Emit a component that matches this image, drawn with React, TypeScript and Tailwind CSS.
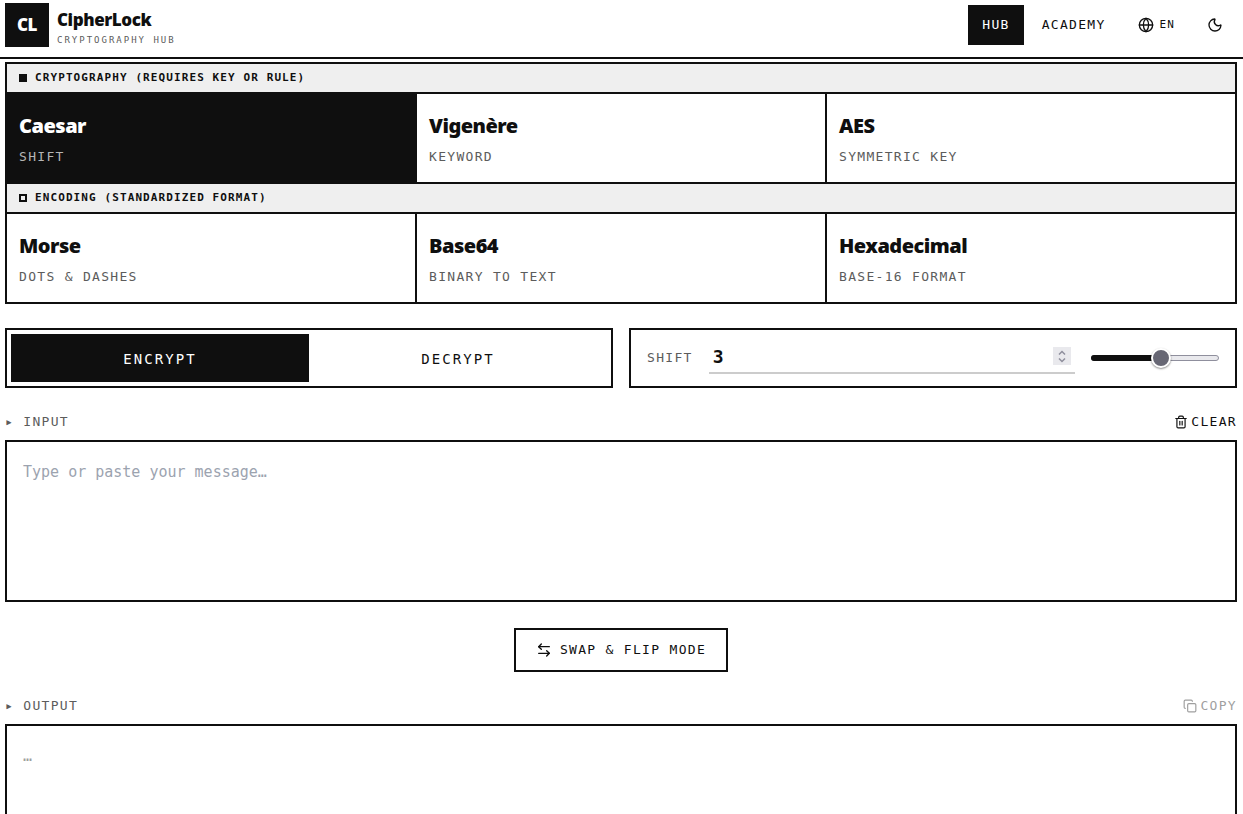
import React, { useState } from 'react';
import { ArrowLeftRight, Copy, Globe, Moon, Trash2 } from 'lucide-react';

type Cipher = { id: string; name: string; hint: string };

const CRYPTOGRAPHY: Cipher[] = [
  { id: 'caesar', name: 'Caesar', hint: 'Shift' },
  { id: 'vigenere', name: 'Vigenère', hint: 'Keyword' },
  { id: 'aes', name: 'AES', hint: 'Symmetric key' },
];

const ENCODING: Cipher[] = [
  { id: 'morse', name: 'Morse', hint: 'Dots & dashes' },
  { id: 'base64', name: 'Base64', hint: 'Binary to text' },
  { id: 'hex', name: 'Hexadecimal', hint: 'Base-16 format' },
];

const MIN_SHIFT = -25;
const MAX_SHIFT = 25;

const StepArrow: React.FC<{ d: string }> = ({ d }) => (
  <svg className="w-2 h-[5px]" viewBox="0 0 8 5" fill="none" stroke="currentColor" strokeWidth="1.5" aria-hidden="true">
    <path d={d} />
  </svg>
);

const GroupHeader: React.FC<{ filled?: boolean; children: React.ReactNode }> = ({ filled, children }) => (
  <h2 className="h-7 px-3 flex items-center gap-2 bg-[#efefef] text-[11px] font-bold uppercase tracking-widest">
    <span className={`w-2 h-2 border-2 border-[#0f0f0f] ${filled ? 'bg-[#0f0f0f]' : ''}`} />
    <span className="pt-px">{children}</span>
  </h2>
);

const CipherRow: React.FC<{ items: Cipher[]; active: string; onPick: (id: string) => void }> = ({
  items,
  active,
  onPick,
}) => (
  <div className="grid grid-cols-3 gap-[2px]">
    {items.map((c) => (
      <button
        key={c.id}
        type="button"
        onClick={() => onPick(c.id)}
        className={`px-3 pt-[18px] pb-[15px] text-left ${active === c.id ? 'bg-[#0f0f0f] text-white' : 'bg-white'}`}
      >
        <span className="block font-['Noto_Sans',sans-serif] text-xl leading-7 font-black tracking-tight">
          {c.name}
        </span>
        <span
          className={`block mt-[7px] text-[13px] leading-5 uppercase tracking-widest ${
            active === c.id ? 'text-[#b5b5b5]' : 'text-[#5c5c5c]'
          }`}
        >
          {c.hint}
        </span>
      </button>
    ))}
  </div>
);

const App: React.FC = () => {
  const [cipher, setCipher] = useState('caesar');
  const [mode, setMode] = useState('Encrypt');
  const [shift, setShift] = useState(3);
  const [text, setText] = useState('');

  const changeShift = (n: number) => setShift(Math.min(MAX_SHIFT, Math.max(MIN_SHIFT, n)));
  const percent = ((shift - MIN_SHIFT) / (MAX_SHIFT - MIN_SHIFT)) * 100;

  return (
    <div className="bg-white text-[#0f0f0f] font-['DejaVu_Sans_Mono',monospace]">
      <header className="pl-[5px] pr-[6px] pt-[3px] pb-[10px] flex items-center justify-between border-b-2 border-[#0f0f0f]">
        <a href="#" className="flex items-center gap-2">
          <span className="w-11 h-11 flex items-center justify-center bg-[#0f0f0f] text-white font-['Noto_Sans',sans-serif] text-[17px] font-black tracking-tight">
            CL
          </span>
          <span className="pt-1">
            <span className="block font-['Noto_Sans',sans-serif] text-[17px] leading-6 font-black tracking-tight">
              CipherLock
            </span>
            <span className="block mt-0.5 text-[9px] leading-3 uppercase tracking-[2px] text-[#5c5c5c]">
              Cryptography Hub
            </span>
          </span>
        </a>
        <nav className="flex items-center gap-1">
          <a
            href="#hub"
            className="h-10 px-[14px] flex items-center bg-[#0f0f0f] text-white text-[13px] uppercase tracking-widest"
          >
            Hub
          </a>
          <a href="#academy" className="h-10 px-[14px] flex items-center text-[13px] uppercase tracking-widest">
            Academy
          </a>
          <button type="button" className="h-10 px-[14px] flex items-center gap-[6px] text-[11px] tracking-widest">
            <Globe className="w-4 h-4" /> EN
          </button>
          <button type="button" aria-label="Toggle theme" className="h-10 px-[14px] flex items-center">
            <Moon className="w-4 h-4" />
          </button>
        </nav>
      </header>

      <main className="pl-[5px] pr-[6px] pt-[3px]">
        <section className="flex flex-col gap-[2px] border-2 border-[#0f0f0f] bg-[#0f0f0f]">
          <GroupHeader filled>Cryptography (requires key or rule)</GroupHeader>
          <CipherRow items={CRYPTOGRAPHY} active={cipher} onPick={setCipher} />
          <GroupHeader>Encoding (standardized format)</GroupHeader>
          <CipherRow items={ENCODING} active={cipher} onPick={setCipher} />
        </section>

        <section className="mt-6 grid grid-cols-2 gap-4">
          <div className="p-1 grid grid-cols-2 border-2 border-[#0f0f0f]">
            {['Encrypt', 'Decrypt'].map((m) => (
              <button
                key={m}
                type="button"
                onClick={() => setMode(m)}
                className={`h-12 pt-0.5 text-sm uppercase tracking-[0.15em] ${mode === m ? 'bg-[#0f0f0f] text-white' : ''}`}
              >
                {m}
              </button>
            ))}
          </div>

          <div className="px-4 flex items-center gap-4 border-2 border-[#0f0f0f]">
            <label htmlFor="shift" className="text-[13px] uppercase tracking-widest text-[#5c5c5c]">
              Shift
            </label>
            <div className="relative flex-1">
              <input
                id="shift"
                type="number"
                min={MIN_SHIFT}
                max={MAX_SHIFT}
                value={shift}
                onChange={(e) => changeShift(Number(e.target.value))}
                className="block w-full h-8 px-1 pb-0.5 border-b-2 border-[#cccccc] bg-transparent text-lg font-bold outline-none [appearance:textfield] [&::-webkit-inner-spin-button]:appearance-none"
              />
              <div className="absolute right-1 top-[5px] w-[18px] h-[18px] flex flex-col items-center justify-center gap-[3px] bg-[#e9e9ed] text-[#8f8f9d]">
                <button type="button" aria-label="Increase shift" onClick={() => changeShift(shift + 1)}>
                  <StepArrow d="M1 4.5 4 1.5l3 3" />
                </button>
                <button type="button" aria-label="Decrease shift" onClick={() => changeShift(shift - 1)}>
                  <StepArrow d="M1 .5l3 3 3-3" />
                </button>
              </div>
            </div>
            <div className="relative w-32 h-5 flex items-center">
              <div className="w-full h-[6px] rounded-full border border-[#8f8f9d] bg-[#e9e9ed]" />
              <div className="absolute left-0 h-[6px] rounded-full bg-[#0f0f0f]" style={{ width: `${percent}%` }} />
              <input
                type="range"
                aria-label="Shift amount"
                min={MIN_SHIFT}
                max={MAX_SHIFT}
                value={shift}
                onChange={(e) => changeShift(Number(e.target.value))}
                className="absolute inset-0 w-full h-5 appearance-none bg-transparent [&::-webkit-slider-thumb]:appearance-none [&::-webkit-slider-thumb]:w-5 [&::-webkit-slider-thumb]:h-5 [&::-webkit-slider-thumb]:rounded-full [&::-webkit-slider-thumb]:border-2 [&::-webkit-slider-thumb]:border-white [&::-webkit-slider-thumb]:bg-[#676774] [&::-webkit-slider-thumb]:shadow-[0_1px_2px_rgba(0,0,0,0.45)]"
              />
            </div>
          </div>
        </section>

        <section className="mt-6">
          <div className="mb-2 h-5 flex items-center justify-between text-[13px] uppercase tracking-widest">
            <label htmlFor="message" className="text-[#5c5c5c]">
              ▸ Input
            </label>
            <button type="button" onClick={() => setText('')} className="flex items-center gap-[3px] uppercase tracking-widest">
              <Trash2 className="w-[14px] h-[14px]" /> Clear
            </button>
          </div>
          <textarea
            id="message"
            value={text}
            onChange={(e) => setText(e.target.value)}
            placeholder="Type or paste your message…"
            className="block w-full h-[162px] p-4 resize-none border-2 border-[#0f0f0f] text-[15px] leading-7 outline-none placeholder:text-[#9ca3af]"
          />
        </section>

        <div className="mt-[26px] flex justify-center">
          <button
            type="button"
            onClick={() => setMode(mode === 'Encrypt' ? 'Decrypt' : 'Encrypt')}
            className="h-11 px-5 flex items-center gap-2 border-2 border-[#0f0f0f] text-[13px] uppercase tracking-widest"
          >
            <ArrowLeftRight className="w-4 h-4" /> Swap &amp; flip mode
          </button>
        </div>

        <section className="mt-6">
          <div className="mb-2 h-5 flex items-center justify-between text-[13px] uppercase tracking-widest">
            <h2 className="text-[#5c5c5c]">▸ Output</h2>
            <button type="button" disabled className="flex items-center gap-[3px] uppercase tracking-widest text-[#9f9f9f]">
              <Copy className="w-[14px] h-[14px]" /> Copy
            </button>
          </div>
          <output className="block min-h-[162px] p-4 border-2 border-[#0f0f0f] text-[15px] leading-7 text-[#9f9f9f]">
            …
          </output>
        </section>
      </main>
    </div>
  );
};

export default App;
